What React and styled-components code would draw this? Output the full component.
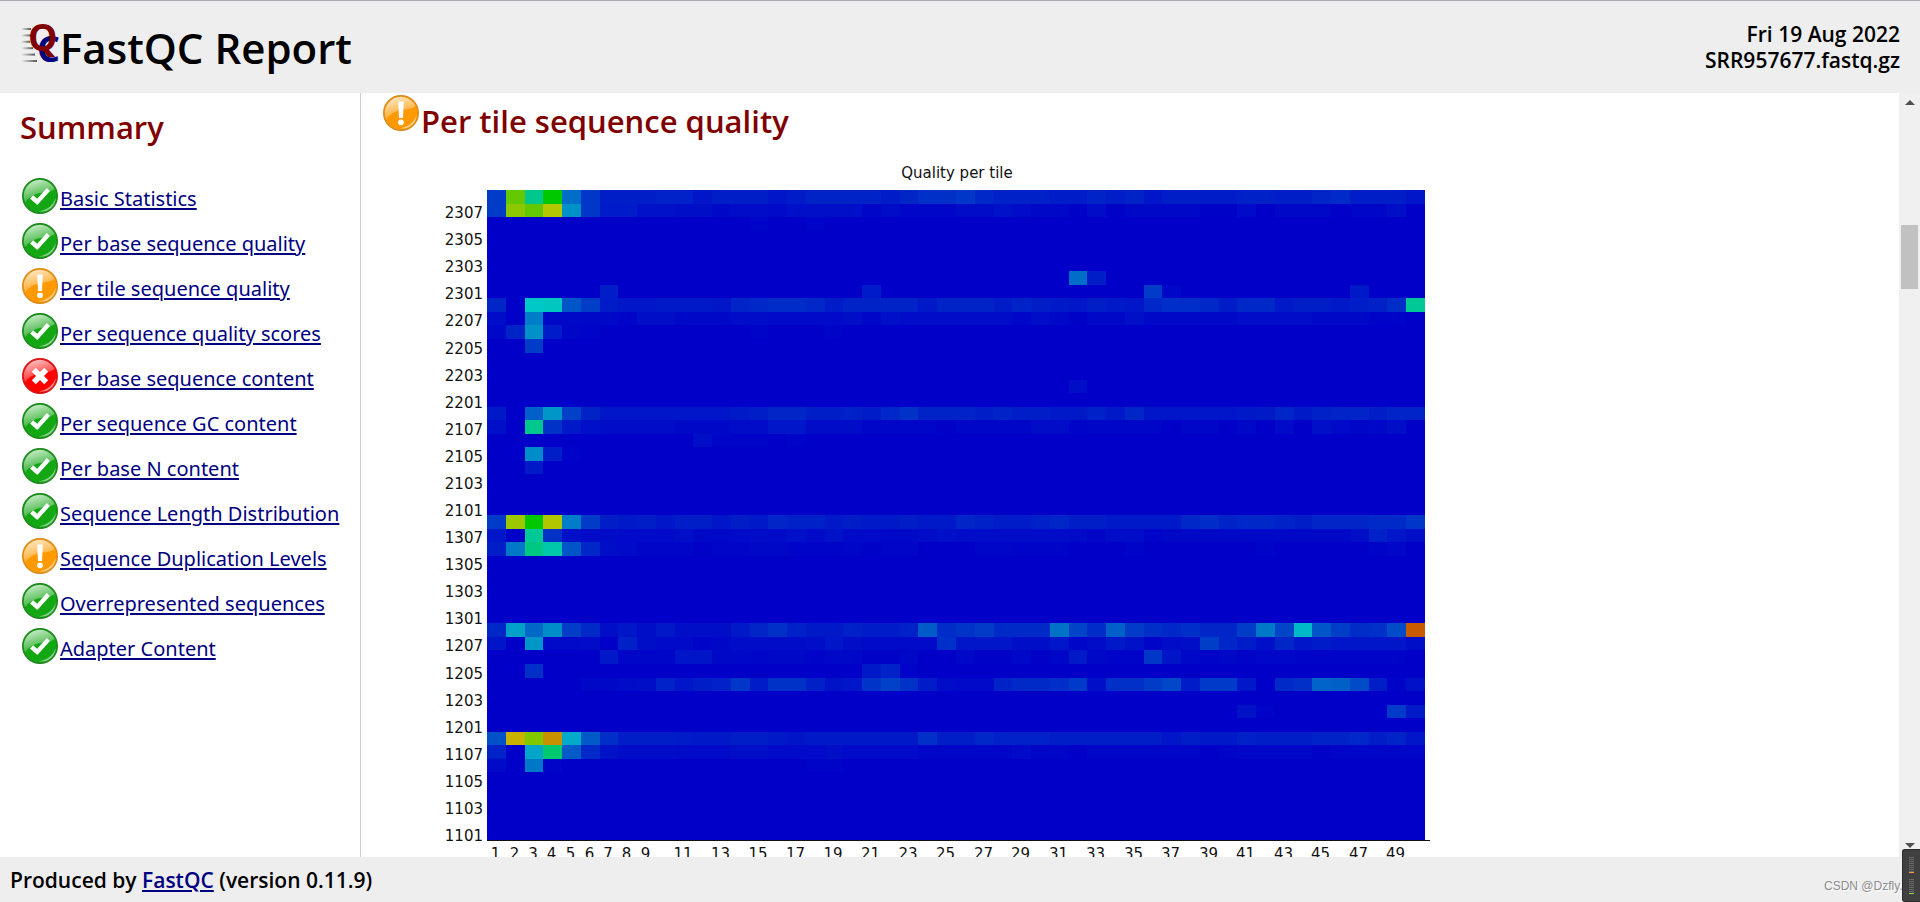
import React from "react";
import styled, { createGlobalStyle } from "styled-components";

const modules = [
  { id: "M0", name: "Basic Statistics", status: "pass" },
  { id: "M1", name: "Per base sequence quality", status: "pass" },
  { id: "M2", name: "Per tile sequence quality", status: "warn" },
  { id: "M3", name: "Per sequence quality scores", status: "pass" },
  { id: "M4", name: "Per base sequence content", status: "fail" },
  { id: "M5", name: "Per sequence GC content", status: "pass" },
  { id: "M6", name: "Per base N content", status: "pass" },
  { id: "M7", name: "Sequence Length Distribution", status: "pass" },
  { id: "M8", name: "Sequence Duplication Levels", status: "warn" },
  { id: "M9", name: "Overrepresented sequences", status: "pass" },
  { id: "M10", name: "Adapter Content", status: "pass" },
];

// Deviation per tile (row, counted from the top) and base, on a 0-800 scale.
// Tiles that are missing here have no deviation at all.
const tileRows = {
  0: [60, 500, 260, 400, 110, 55, 30, 30, 30, 34, 34, 22, 30, 30, 30, 22, 28, 35, 35, 35, 35, 27, 38, 48, 48, 55, 40, 33, 33, 33, 28, 28, 35, 30, 35, 22, 30, 30, 28, 28, 33, 33, 30, 30, 38, 43, 30, 30, 30, 22],
  1: [60, 540, 500, 580, 145, 55, 28, 28, 18, 18, 14, 14, 8, 12, 12, 10, 15, 15, 15, 15, 6, 12, 6, 6, 6, 12, 12, 18, 12, 8, 8, 2, 12, 2, 8, 8, 8, 8, 2, 2, 10, 0, 8, 8, 8, 2, 6, 6, 14, 0],
  2: [0, 0, 0, 0, 0, 0, 0, 0, 0, 0, 0, 0, 0, 0, 3, 0, 0, 4],
  6: [0, 0, 0, 0, 0, 0, 0, 0, 0, 0, 0, 0, 0, 0, 0, 0, 0, 0, 0, 0, 0, 0, 0, 0, 0, 0, 0, 0, 0, 0, 0, 110, 30],
  7: [0, 0, 0, 0, 0, 0, 30, 0, 0, 0, 0, 0, 0, 0, 0, 0, 0, 0, 0, 0, 28, 0, 0, 0, 0, 0, 0, 0, 0, 0, 0, 0, 0, 0, 0, 60, 8, 0, 0, 0, 0, 0, 0, 0, 0, 0, 25],
  8: [38, 0, 200, 208, 85, 62, 27, 22, 22, 25, 25, 25, 22, 36, 40, 45, 45, 40, 28, 35, 35, 35, 35, 25, 35, 35, 35, 28, 35, 30, 25, 22, 30, 25, 22, 40, 46, 46, 40, 28, 40, 40, 25, 30, 30, 25, 30, 33, 45, 250],
  9: [12, 0, 125, 8, 8, 8, 8, 4, 14, 14, 8, 8, 8, 12, 12, 10, 10, 10, 10, 14, 6, 16, 12, 12, 12, 12, 12, 12, 6, 12, 8, 2, 8, 8, 16, 8, 8, 8, 8, 8, 12, 12, 12, 12, 8, 8, 8, 4, 4, 0],
  10: [8, 35, 145, 28, 6, 4, 0, 0, 0, 0, 0, 0, 0, 0, 4, 0, 0, 0, 4],
  11: [0, 0, 60],
  14: [0, 0, 0, 0, 0, 0, 0, 0, 0, 0, 0, 0, 0, 0, 0, 0, 0, 0, 0, 0, 0, 0, 0, 0, 0, 0, 0, 0, 0, 0, 0, 14],
  16: [25, 0, 95, 150, 65, 35, 22, 22, 22, 22, 22, 22, 22, 26, 30, 38, 38, 30, 30, 33, 28, 40, 50, 35, 35, 35, 30, 35, 30, 30, 25, 25, 32, 25, 38, 22, 22, 22, 22, 22, 25, 26, 38, 26, 32, 36, 36, 30, 36, 36],
  17: [16, 0, 260, 50, 25, 16, 12, 12, 12, 12, 8, 8, 8, 12, 12, 22, 22, 12, 12, 12, 6, 6, 6, 6, 2, 6, 6, 6, 6, 12, 12, 4, 6, 6, 6, 6, 0, 6, 6, 0, 8, 0, 10, 0, 16, 10, 6, 8, 14, 0],
  18: [0, 0, 0, 0, 0, 0, 0, 0, 0, 0, 0, 14, 3, 3, 3, 0, 4],
  19: [0, 0, 140, 30, 3],
  20: [0, 0, 26],
  24: [60, 555, 400, 575, 125, 60, 30, 25, 30, 22, 30, 30, 22, 30, 25, 38, 33, 33, 25, 30, 25, 25, 30, 25, 25, 38, 33, 28, 28, 32, 38, 30, 30, 25, 25, 25, 25, 40, 45, 35, 40, 40, 35, 30, 38, 38, 38, 42, 42, 55],
  25: [22, 0, 250, 50, 16, 12, 12, 10, 10, 10, 14, 8, 8, 10, 12, 10, 16, 10, 18, 10, 10, 8, 8, 12, 16, 12, 12, 12, 12, 12, 12, 10, 5, 12, 12, 3, 8, 8, 8, 8, 8, 8, 8, 8, 8, 8, 14, 32, 22, 14],
  26: [30, 120, 270, 230, 85, 38, 14, 10, 5, 5, 5, 2, 5, 5, 8, 8, 4, 4, 4, 6, 2, 5, 5, 0, 0, 0, 6, 6, 4, 4, 4, 0, 0, 0, 4, 0, 0, 0, 0, 0, 0, 4, 0, 0, 0, 0, 0, 4, 7, 0],
  32: [40, 160, 105, 140, 62, 42, 14, 22, 14, 24, 14, 14, 14, 25, 38, 48, 33, 25, 25, 33, 28, 28, 33, 90, 45, 52, 60, 42, 42, 42, 115, 68, 45, 95, 60, 46, 40, 46, 38, 38, 60, 120, 68, 185, 85, 62, 44, 48, 75, 710],
  33: [20, 0, 150, 10, 10, 12, 0, 32, 14, 10, 10, 4, 8, 12, 12, 12, 12, 14, 22, 14, 10, 10, 10, 10, 48, 22, 22, 22, 14, 14, 22, 6, 12, 24, 18, 4, 12, 14, 62, 38, 28, 16, 38, 22, 28, 22, 22, 22, 22, 14],
  34: [0, 0, 0, 0, 0, 0, 25, 6, 6, 6, 20, 20, 8, 8, 6, 8, 8, 3, 8, 8, 2, 2, 8, 0, 0, 8, 2, 2, 8, 2, 6, 26, 8, 3, 3, 55, 20, 8, 3, 8, 3, 7, 7, 4, 4, 4, 4, 4, 4],
  35: [0, 0, 48, 0, 0, 0, 0, 0, 0, 0, 0, 0, 0, 0, 0, 0, 0, 0, 0, 0, 25, 34, 4],
  36: [0, 0, 0, 0, 0, 8, 8, 12, 14, 34, 22, 30, 34, 55, 28, 50, 50, 32, 18, 22, 52, 65, 50, 28, 12, 10, 10, 35, 42, 42, 46, 58, 16, 48, 48, 60, 72, 28, 58, 58, 24, 0, 42, 48, 100, 96, 75, 30, 4, 18],
  38: [0, 0, 0, 0, 0, 0, 0, 0, 0, 0, 0, 0, 0, 0, 0, 0, 0, 0, 0, 0, 0, 0, 0, 0, 0, 0, 0, 0, 0, 0, 0, 0, 0, 0, 0, 0, 0, 0, 0, 0, 18, 4, 0, 0, 0, 0, 0, 0, 58, 26],
  40: [80, 620, 530, 655, 170, 90, 46, 30, 30, 30, 27, 25, 25, 30, 30, 25, 20, 25, 25, 25, 25, 25, 25, 48, 30, 30, 40, 34, 34, 34, 30, 30, 30, 30, 30, 30, 22, 30, 25, 25, 32, 30, 30, 30, 35, 35, 40, 30, 36, 22],
  41: [35, 0, 165, 290, 90, 42, 18, 12, 12, 12, 10, 10, 10, 14, 14, 10, 10, 10, 14, 10, 10, 10, 10, 6, 6, 6, 6, 6, 10, 6, 6, 0, 6, 6, 6, 6, 6, 6, 0, 4, 7, 7, 7, 7, 2, 6, 6, 6, 6, 6],
  42: [10, 0, 120, 5, 0, 0, 0, 0, 0, 0, 0, 0, 0, 0, 0, 0, 0, 3, 3],
};

const ROWS = 48;
const BASES = 50;
const plot = { left: 106, top: 30, width: 938, height: 650 };

const colX = (i) => plot.left + Math.round((i * plot.width) / BASES);
const rowY = (i) => plot.top + Math.round((i * plot.height) / ROWS);

// cold (blue) to hot (red) gradient
const heat = (v) => {
  if (v <= 200) return `rgb(0, ${v}, 200)`;
  if (v <= 400) return `rgb(0, 200, ${400 - v})`;
  if (v <= 600) return `rgb(${v - 400}, 200, 0)`;
  return `rgb(200, ${800 - v}, 0)`;
};

const tileLabels = ["23", "22", "21", "13", "12", "11"].flatMap((swath) =>
  ["07", "05", "03", "01"].map((n) => swath + n)
);

const baseLabels = [];
for (let i = 1; i < BASES; i += i < 9 ? 1 : 2) baseLabels.push(i);

const colours = {
  pass: { edge: "#1f861f", fill: "#14a714", light: "#8fd08f" },
  warn: { edge: "#d98a1c", fill: "#ff9900", light: "#ffd08a" },
  fail: { edge: "#d41818", fill: "#ff0000", light: "#ff9090" },
};

const StatusIcon = ({ status }) => {
  const c = colours[status];
  return (
    <Icon viewBox="0 0 40 40" role="img" aria-label={status}>
      <defs>
        <linearGradient id={`shine-${status}`} x1="0" y1="0" x2="0.4" y2="1">
          <stop offset="0" stopColor="#fff" stopOpacity="0.85" />
          <stop offset="1" stopColor="#fff" stopOpacity="0.1" />
        </linearGradient>
      </defs>
      <circle cx="20" cy="20" r="17.3" fill={c.fill} stroke={c.edge} strokeWidth="1.4" />
      <path
        d="M3.8 20A16.2 16.2 0 0 1 34.6 13C30 17 22 15.5 15 18.5C10 20.5 6.5 24 5.2 26.5A16 16 0 0 1 3.8 20Z"
        fill={`url(#shine-${status})`}
      />
      <path d="M19 35.2C27 34.5 33.5 29 35.6 22C35.6 30 28 37 19 35.2Z" fill={c.light} />
      {status === "pass" && (
        <path d="M10 22.5L13.2 19.2L17.2 22.8L26.8 12L30 15L18 28.2Q17.2 29 16.4 28.3Z" fill="#fff" />
      )}
      {status === "warn" && (
        <g fill="#fff">
          <path d="M17.2 8.6H22.8L22 25H18Z" />
          <circle cx="20" cy="29.3" r="2.9" />
        </g>
      )}
      {status === "fail" && (
        <path d="M13.8 13.8L26.2 26.2M26.2 13.8L13.8 26.2" stroke="#fff" strokeWidth="5.6" />
      )}
    </Icon>
  );
};

const Logo = () => (
  <LogoSvg viewBox="0 0 40 42" role="img" aria-label="FastQC">
    <defs>
      <linearGradient id="trail" x1="0" x2="1">
        <stop offset="0" stopColor="#555" stopOpacity="0" />
        <stop offset="1" stopColor="#555" />
      </linearGradient>
    </defs>
    {[10, 10, 9, 12, 14, 16].map((w, i) => (
      <rect key={i} x="1" y={4 + i * 6.4} width={w} height="2" fill="url(#trail)" />
    ))}
    <text x="17" y="38" fontSize="36" fill="#000080">C</text>
    <text x="8" y="27" fontSize="37" fill="#800000">Q</text>
  </LogoSvg>
);

const TileChart = () => (
  <Chart width="1060" height="700" role="img" aria-label="Per tile quality graph">
    <text x={plot.left + plot.width / 2 + 1} y="18" textAnchor="middle">
      Quality per tile
    </text>
    <g shapeRendering="crispEdges">
      <rect x={plot.left} y={plot.top} width={plot.width} height={plot.height} fill={heat(0)} />
      {Object.entries(tileRows).map(([row, values]) => {
        const r = Number(row);
        return values.map((v, c) =>
          v > 0 ? (
            <rect
              key={`${row}-${c}`}
              x={colX(c)}
              y={rowY(r)}
              width={colX(c + 1) - colX(c)}
              height={rowY(r + 1) - rowY(r)}
              fill={heat(v)}
            />
          ) : null
        );
      })}
      <rect x={plot.left} y={plot.top + plot.height} width={plot.width + 5} height="1" />
    </g>
    {tileLabels.map((label, i) => (
      <text key={label} x={plot.left - 4} y={rowY(2 * i + 2) + 1} textAnchor="end">
        {label}
      </text>
    ))}
    {baseLabels.map((n) => (
      <text key={n} x={(colX(n - 1) + colX(n)) / 2 - 1} y="699" textAnchor="middle">
        {n}
      </text>
    ))}
  </Chart>
);

const App = () => (
  <Page>
    <GlobalStyle />
    <Header>
      <Title>
        <Logo />
        FastQC Report
      </Title>
      <FileInfo>
        Fri 19 Aug 2022
        <br />
        SRR957677.fastq.gz
      </FileInfo>
    </Header>
    <Body>
      <Summary>
        <SummaryTitle>Summary</SummaryTitle>
        <ModuleList>
          {modules.map((m) => (
            <li key={m.id}>
              <StatusIcon status={m.status} />
              <a href={`#${m.id}`}>{m.name}</a>
            </li>
          ))}
        </ModuleList>
      </Summary>
      <Main>
        <ModuleTitle id="M2">
          <StatusIcon status="warn" />
          <span>Per tile sequence quality</span>
        </ModuleTitle>
        <TileChart />
      </Main>
      <ScrollBar aria-hidden="true">
        <Arrow $up />
        <Track>
          <Thumb />
        </Track>
        <Arrow />
      </ScrollBar>
    </Body>
    <Footer>
      <p>
        Produced by <a href="#fastqc">FastQC</a> (version 0.11.9)
      </p>
      <Watermark>CSDN @Dzfly..</Watermark>
    </Footer>
    <Meter>
      <Level $peak="#f5a030" />
      <Level $peak="#8be03c" />
    </Meter>
  </Page>
);

const GlobalStyle = createGlobalStyle`
  * {
    box-sizing: border-box;
  }
  body {
    margin: 0;
    background: #fff;
    color: #000;
    font-family: "Open Sans", "Noto Sans", sans-serif;
    font-size: 20px;
  }
  h1, h2, p, ul {
    margin: 0;
    padding: 0;
  }
  a {
    color: #000080;
    text-underline-offset: 2px;
    text-decoration-thickness: 2px;
  }
`;

const Page = styled.div`
  display: flex;
  flex-direction: column;
  height: 100vh;
  overflow: hidden;
`;

const Header = styled.header`
  display: flex;
  justify-content: space-between;
  align-items: flex-start;
  flex: none;
  padding: 20px 20px 18px;
  border-top: 1px solid #a9a9b0;
  background: #eee;
`;

const Title = styled.h1`
  display: flex;
  align-items: center;
  font-size: 42px;
  font-weight: 600;
  line-height: 54px;
`;

const LogoSvg = styled.svg`
  width: 40px;
  height: 42px;
  margin-bottom: 6px;
  overflow: visible;
  font-family: "Open Sans", sans-serif;
  font-weight: 700;
`;

const FileInfo = styled.div`
  font-size: 21px;
  font-weight: 600;
  line-height: 26px;
  text-align: right;
`;

const Body = styled.div`
  display: flex;
  flex: 1;
  min-height: 0;
`;

const Summary = styled.nav`
  flex: none;
  width: 361px;
  padding: 14px 0 0 20px;
  border-right: 1px solid #ccc;
`;

const SummaryTitle = styled.h2`
  margin-bottom: 26px;
  color: #800000;
  font-size: 31px;
  font-weight: 600;
  line-height: 40px;
`;

const ModuleList = styled.ul`
  list-style: none;
  font-family: "Noto Sans", sans-serif;
  li {
    display: flex;
    align-items: center;
    height: 45px;
    white-space: nowrap;
  }
  a {
    padding-top: 5px;
  }
`;

const Icon = styled.svg`
  flex: none;
  width: 40px;
  height: 40px;
`;

const Main = styled.main`
  flex: 1;
  min-width: 0;
  padding-left: 20px;
  overflow: hidden;
`;

const ModuleTitle = styled.h2`
  display: flex;
  align-items: flex-start;
  height: 67px;
  color: #800000;
  font-size: 31px;
  font-weight: 600;
  line-height: 40px;
  span {
    padding-top: 8px;
  }
`;

const Chart = styled.svg`
  display: block;
  font-family: "DejaVu Sans", sans-serif;
  font-size: 15px;
  fill: #111;
`;

const ScrollBar = styled.div`
  display: flex;
  flex-direction: column;
  align-items: center;
  flex: none;
  width: 21px;
  padding: 7px 0 9px;
  background: #f0f0f0;
`;

const Arrow = styled.span`
  border: 5px solid transparent;
  border-top: ${(props) => (props.$up ? "none" : "5px solid #505050")};
  border-bottom: ${(props) => (props.$up ? "5px solid #505050" : "none")};
`;

const Track = styled.div`
  flex: 1;
  padding-top: 120px;
`;

const Thumb = styled.div`
  width: 17px;
  height: 64px;
  background: #c1c1c1;
`;

const Footer = styled.footer`
  display: flex;
  justify-content: space-between;
  align-items: center;
  flex: none;
  height: 45px;
  padding: 0 14px 0 10px;
  background: #eee;
  font-size: 21px;
  font-weight: 600;
`;

const Watermark = styled.span`
  padding-top: 12px;
  color: #8c8c8c;
  font-family: "Liberation Sans", sans-serif;
  font-size: 12px;
  font-weight: 400;
  text-shadow: 1px 1px 0 #fff;
`;

// desktop widget that sits on top of the window corner
const Meter = styled.div`
  position: fixed;
  right: 0;
  bottom: 0;
  display: flex;
  flex-direction: column;
  gap: 6px;
  width: 18px;
  height: 53px;
  padding: 7px 6px;
  border: 1px solid #2c2c2c;
  border-right: none;
  border-radius: 3px 0 0 3px;
  background: #404040;
`;

const Level = styled.div`
  height: 17px;
  border-bottom: 1px solid ${(props) => props.$peak};
  background: repeating-linear-gradient(#6a6a6a 0 1px, transparent 1px 2px);
`;

export default App;
